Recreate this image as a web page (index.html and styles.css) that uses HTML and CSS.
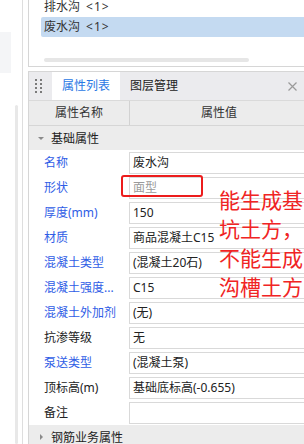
FILE: index.html
```html
<!DOCTYPE html>
<html lang="zh-CN">
<head>
    <meta charset="UTF-8">
    <meta name="viewport" content="width=device-width, initial-scale=1.0">
    <title>属性列表</title>
    <link rel="stylesheet" href="styles.css">
</head>
<body>
    <div class="page">
        <aside class="side">
            <div class="side-card"></div>
            <div class="side-track"></div>
            <div class="side-line"></div>
        </aside>
        <main class="main">
            <section class="tree">
                <div class="tree-row">排水沟<span class="count">&lt;1&gt;</span></div>
                <div class="tree-row selected">废水沟<span class="count">&lt;1&gt;</span></div>
                <div class="tree-scroll"></div>
            </section>

            <section class="props">
                <div class="tabs">
                    <div class="grip">
                        <svg width="7" height="14" viewBox="0 0 7 14">
                            <g fill="#7a7a7a">
                                <rect x="0" y="0" width="2" height="2"/><rect x="5" y="0" width="2" height="2"/>
                                <rect x="0" y="4" width="2" height="2"/><rect x="5" y="4" width="2" height="2"/>
                                <rect x="0" y="8" width="2" height="2"/><rect x="5" y="8" width="2" height="2"/>
                                <rect x="0" y="12" width="2" height="2"/><rect x="5" y="12" width="2" height="2"/>
                            </g>
                        </svg>
                    </div>
                    <div class="tab active">属性列表</div>
                    <div class="tab">图层管理</div>
                    <div class="close">
                        <svg width="9" height="9" viewBox="0 0 9 9">
                            <path d="M0.5 0.5 L8.5 8.5 M8.5 0.5 L0.5 8.5" stroke="#9a9a9a" stroke-width="1.2"/>
                        </svg>
                    </div>
                </div>

                <div class="grid-head">
                    <div class="head-name">属性名称</div>
                    <div class="head-value">属性值</div>
                </div>

                <div class="group"><span class="arrow down"></span>基础属性</div>

                <div class="row"><div class="label link">名称</div><div class="value">废水沟</div></div>
                <div class="row"><div class="label link">形状</div><div class="value muted">面型</div></div>
                <div class="row"><div class="label link">厚度(mm)</div><div class="value">150</div></div>
                <div class="row"><div class="label link">材质</div><div class="value">商品混凝土C15</div></div>
                <div class="row"><div class="label link">混凝土类型</div><div class="value">(混凝土20石)</div></div>
                <div class="row"><div class="label link">混凝土强度...</div><div class="value">C15</div></div>
                <div class="row"><div class="label link">混凝土外加剂</div><div class="value">(无)</div></div>
                <div class="row"><div class="label">抗渗等级</div><div class="value">无</div></div>
                <div class="row"><div class="label link">泵送类型</div><div class="value">(混凝土泵)</div></div>
                <div class="row"><div class="label">顶标高(m)</div><div class="value">基础底标高(-0.655)</div></div>
                <div class="row"><div class="label">备注</div><div class="value"></div></div>

                <div class="group"><span class="arrow right"></span>钢筋业务属性</div>

                <div class="mark-box"></div>
                <div class="mark-note">能生成基<br>坑土方，<br>不能生成<br>沟槽土方</div>
            </section>
        </main>
    </div>
</body>
</html>
```

FILE: styles.css
```css
body {
    margin: 0;
    padding: 0;
    background: #fff;
    overflow: hidden;
    font-family: "Noto Sans", "Noto Sans CJK SC", sans-serif;
    font-size: 12px;
    color: #222;
}
.page {
    display: flex;
    height: 444px;
    overflow: hidden;
}

/* left strip */
.side {
    width: 28px;
    flex-shrink: 0;
    display: flex;
    align-items: flex-start;
}
.side-card {
    width: 11px;
    height: 41px;
    margin-top: 32px;
    background: #f4f5f7;
}
.side-track {
    width: 3px;
    height: 339px;
    margin-top: 105px;
    margin-left: 4px;
    background: #e8e8e8;
    border-radius: 2px;
}
.side-line {
    width: 1px;
    margin-left: 4px;
    align-self: stretch;
    background: #dedede;
}

.main {
    width: 280px;
    flex-shrink: 0;
}

/* tree list */
.tree {
    height: 67px;
    box-sizing: border-box;
    border: 1px solid #d6d6d6;
    border-top: none;
    padding-left: 12px;
    overflow: hidden;
}
.tree-row {
    height: 20px;
    line-height: 20px;
    padding-left: 3px;
    color: #333;
    white-space: nowrap;
}
.tree-row:first-child {
    margin-top: -3px;
}
.tree-row.selected {
    background: #c4daf1;
    border-radius: 2px 0 0 2px;
}
.count {
    margin-left: 6px;
    letter-spacing: 1px;
}
.tree-scroll {
    width: 205px;
    height: 4px;
    margin: 21px 0 0 3px;
    background: #e6e6e6;
    border-radius: 2px;
}

/* property panel */
.props {
    position: relative;
    margin-top: 4px;
    border-left: 1px solid #d6d6d6;
    border-top: 1px solid #d6d6d6;
}
.tabs {
    display: flex;
    height: 28px;
    background: #ebebee;
    border-bottom: 1px solid #dadada;
}
.grip {
    display: flex;
    align-items: center;
    padding-left: 6px;
    width: 10px;
}
.tab {
    width: 68px;
    line-height: 28px;
    text-align: center;
    color: #222;
}
.tab.active {
    margin-left: 7px;
    background: #fff;
    color: #2a78e4;
}
.close {
    margin-left: auto;
    margin-right: 11px;
    display: flex;
    align-items: center;
}

.grid-head {
    display: grid;
    grid-template-columns: 101px 1fr;
    height: 24px;
    line-height: 24px;
    background: #ececec;
    border-bottom: 1px solid #d6d6d6;
    color: #333;
}
.head-name {
    text-align: center;
    border-right: 1px solid #d2d2d2;
}
.head-value {
    text-align: center;
}

.group {
    display: flex;
    align-items: center;
    height: 24px;
    padding-left: 9px;
    background: #ececec;
    color: #222;
}
.arrow {
    width: 0;
    height: 0;
    margin-right: 7px;
}
.arrow.down {
    border-left: 3px solid transparent;
    border-right: 3px solid transparent;
    border-top: 3px solid #8a8a8a;
}
.arrow.right {
    margin-left: 2px;
    margin-right: 8px;
    border-top: 3px solid transparent;
    border-bottom: 3px solid transparent;
    border-left: 3px solid #8a8a8a;
}

.row {
    display: grid;
    grid-template-columns: 100px 1fr;
    height: 25px;
}
.label {
    padding-left: 15px;
    line-height: 25px;
    white-space: nowrap;
    color: #222;
}
.label.link {
    color: #2f5de6;
}
.value {
    margin: 2px 0 1px;
    border: 1px solid #d9d9d9;
    padding-left: 3px;
    line-height: 20px;
    white-space: nowrap;
    color: #222;
}
.value.muted {
    color: #9a9a9a;
}

/* red annotation drawn over the panel */
.mark-box {
    position: absolute;
    left: 92px;
    top: 103px;
    width: 82px;
    height: 22px;
    box-sizing: border-box;
    border: 2px solid #ec1c1c;
    border-radius: 3px;
}
.mark-note {
    position: absolute;
    left: 190px;
    top: 113px;
    font-family: "Noto Sans CJK SC", sans-serif;
    font-size: 21px;
    line-height: 29px;
    color: #f02424;
    white-space: nowrap;
}
```
